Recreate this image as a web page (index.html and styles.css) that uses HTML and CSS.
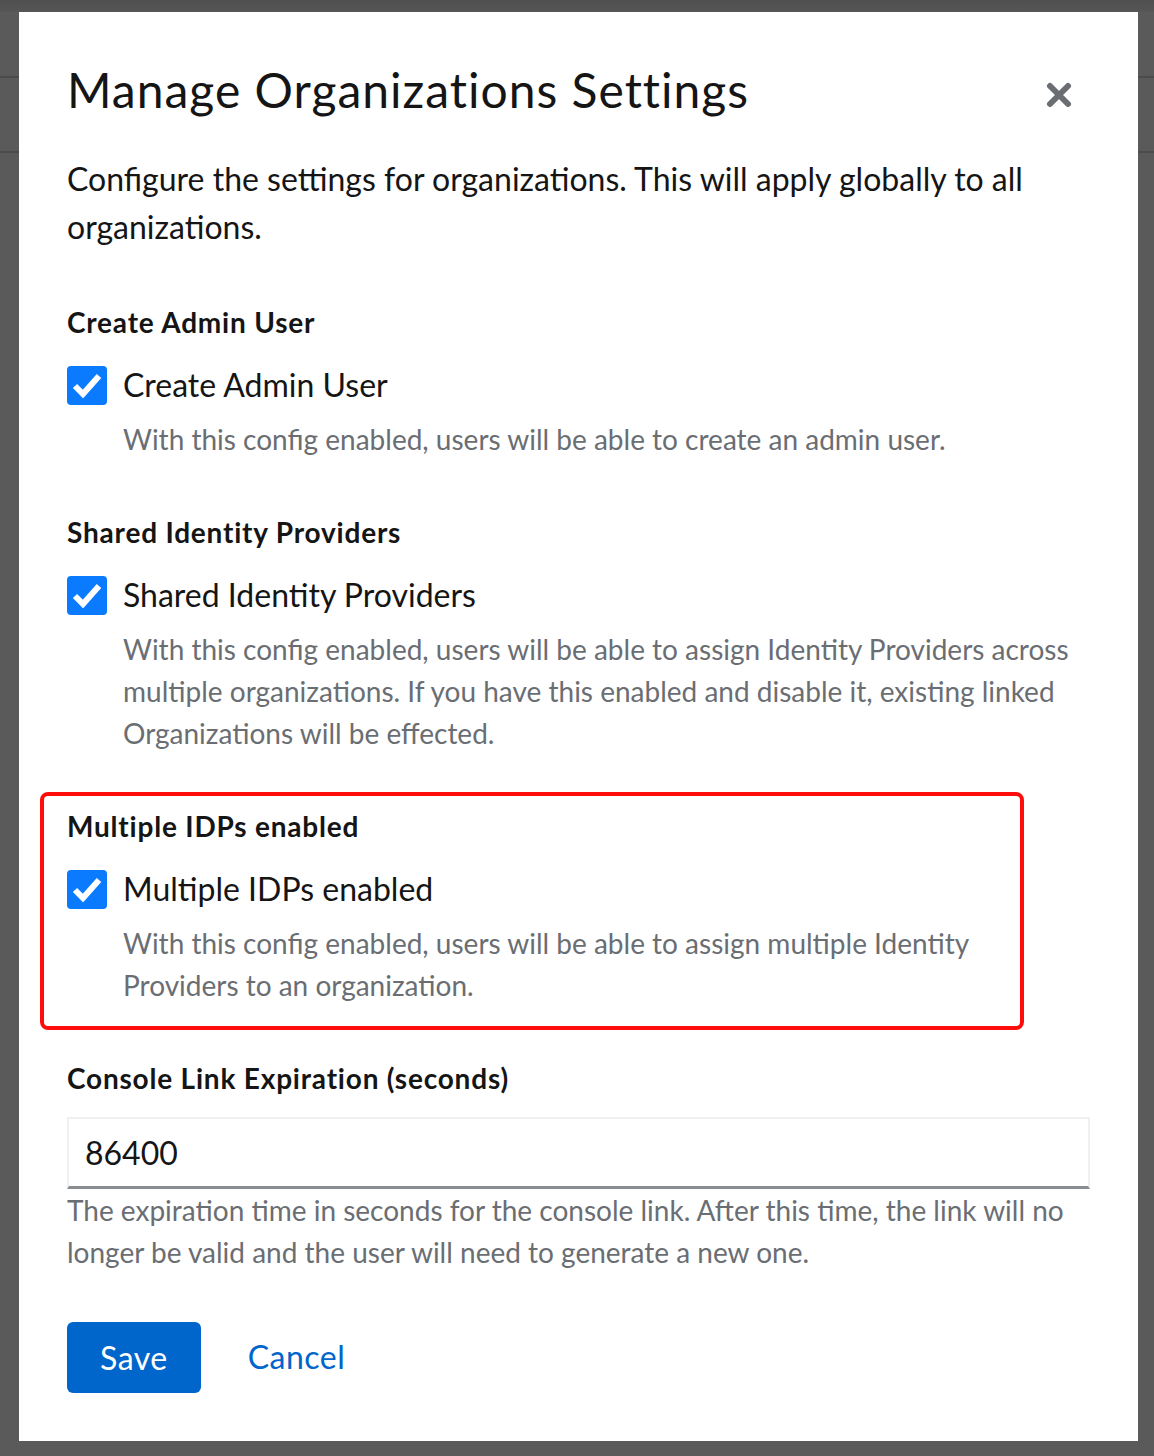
FILE: index.html
```html
<!DOCTYPE html>
<html lang="en">
<head>
    <meta charset="UTF-8">
    <meta name="viewport" content="width=device-width, initial-scale=1.0">
    <title>Manage Organizations Settings</title>
    <link rel="stylesheet" href="styles.css">
</head>
<body>
    <div class="modal">
        <div class="modal-header">
            <h1 class="modal-title">Manage Organizations Settings</h1>
            <button class="close" aria-label="Close">
                <svg width="26" height="26" viewBox="0 0 26 26">
                    <path d="M4 4 L22 22 M22 4 L4 22" stroke="#6a6e73" stroke-width="6" stroke-linecap="round"/>
                </svg>
            </button>
        </div>
        <p class="modal-desc">Configure the settings for organizations. This will apply globally to all organizations.</p>

        <form class="form">
            <div class="group">
                <div class="group-label">Create Admin User</div>
                <label class="check">
                    <span class="box">
                        <svg width="30" height="26" viewBox="0 0 30 26"><path d="M3 14 L11 22 L27 4" stroke="#fff" stroke-width="6" fill="none"/></svg>
                    </span>
                    <span>Create Admin User</span>
                </label>
                <div class="check-desc">With this config enabled, users will be able to create an admin user.</div>
            </div>

            <div class="group">
                <div class="group-label">Shared Identity Providers</div>
                <label class="check">
                    <span class="box">
                        <svg width="30" height="26" viewBox="0 0 30 26"><path d="M3 14 L11 22 L27 4" stroke="#fff" stroke-width="6" fill="none"/></svg>
                    </span>
                    <span>Shared Identity Providers</span>
                </label>
                <div class="check-desc">With this config enabled, users will be able to assign Identity Providers across multiple organizations. If you have this enabled and disable it, existing linked Organizations will be effected.</div>
            </div>

            <div class="group highlighted">
                <div class="group-label">Multiple IDPs enabled</div>
                <label class="check">
                    <span class="box">
                        <svg width="30" height="26" viewBox="0 0 30 26"><path d="M3 14 L11 22 L27 4" stroke="#fff" stroke-width="6" fill="none"/></svg>
                    </span>
                    <span>Multiple IDPs enabled</span>
                </label>
                <div class="check-desc">With this config enabled, users will be able to assign multiple Identity Providers to an organization.</div>
            </div>

            <div class="group">
                <div class="group-label">Console Link Expiration (seconds)</div>
                <input class="text-input" type="text" value="86400">
                <div class="helper">The expiration time in seconds for the console link. After this time, the link will no longer be valid and the user will need to generate a new one.</div>
            </div>
        </form>

        <div class="actions">
            <button class="btn-primary">Save</button>
            <button class="btn-link">Cancel</button>
        </div>
    </div>
</body>
</html>
```

FILE: styles.css
```css
html, body {
    margin: 0;
    padding: 0;
}
body {
    background:
        linear-gradient(#4b4b4b, #4b4b4b) 0 76px / 100% 2px no-repeat,
        linear-gradient(#4b4b4b, #4b4b4b) 0 151px / 100% 2px no-repeat,
        linear-gradient(#4f4f4f, #565656) 0 0 / 100% 12px no-repeat,
        #5a5a5a;
    font-family: Lato, "Liberation Sans", sans-serif;
    color: #151515;
    padding: 12px 16px 14px 19px;
}
.modal {
    background: #fff;
    width: 1119px;
    box-sizing: border-box;
    padding: 46px 48px 48px;
}
.modal-header {
    display: flex;
    justify-content: space-between;
    align-items: flex-start;
}
.modal-title {
    margin: 0;
    font-size: 48px;
    line-height: 64px;
    font-weight: 400;
    letter-spacing: 1px;
}
.close {
    width: 62px;
    height: 64px;
    margin-top: 5px;
    border: none;
    background: none;
    padding: 0;
    display: flex;
    align-items: center;
    justify-content: center;
    cursor: pointer;
}
.modal-desc {
    margin: 28px 0 0;
    font-size: 32px;
    line-height: 48px;
}
.form {
    display: flex;
    flex-direction: column;
    gap: 51px;
    margin-top: 50px;
}
.group {
    position: relative;
}
.group-label {
    font-size: 28px;
    line-height: 42px;
    font-weight: 700;
    letter-spacing: 0.8px;
}
.check {
    display: flex;
    align-items: center;
    gap: 16px;
    margin-top: 18px;
    font-size: 32px;
    line-height: 48px;
}
.box {
    width: 40px;
    height: 39px;
    background: #0a7bff;
    border-radius: 4px;
    display: flex;
    align-items: center;
    justify-content: center;
}
.check-desc {
    margin-top: 9px;
    padding-left: 56px;
    font-size: 28px;
    line-height: 42px;
    color: #6a6e73;
}
.highlighted::after {
    content: "";
    position: absolute;
    top: -13px;
    bottom: -24px;
    left: -27px;
    right: 66px;
    border: 4px solid #ff0d0d;
    border-radius: 8px;
}
.text-input {
    display: block;
    width: 100%;
    box-sizing: border-box;
    height: 72px;
    margin-top: 18px;
    padding: 0 16px;
    border: 2px solid #f0f0f0;
    border-bottom: 3px solid #8a8d90;
    font-family: inherit;
    font-size: 32px;
    color: #151515;
    outline: none;
}
.helper {
    font-size: 28px;
    line-height: 42px;
    color: #6a6e73;
}
.actions {
    display: flex;
    align-items: center;
    gap: 15px;
    margin-top: 48px;
}
.btn-primary {
    background: #0066cc;
    color: #fff;
    border: none;
    border-radius: 6px;
    padding: 12px 33px;
    height: 71px;
    font-family: inherit;
    font-size: 32px;
    line-height: 48px;
    letter-spacing: 0.5px;
    cursor: pointer;
}
.btn-link {
    background: none;
    border: none;
    color: #0066cc;
    padding: 12px 32px;
    font-family: inherit;
    font-size: 32px;
    line-height: 48px;
    letter-spacing: 0.5px;
    cursor: pointer;
}
```
